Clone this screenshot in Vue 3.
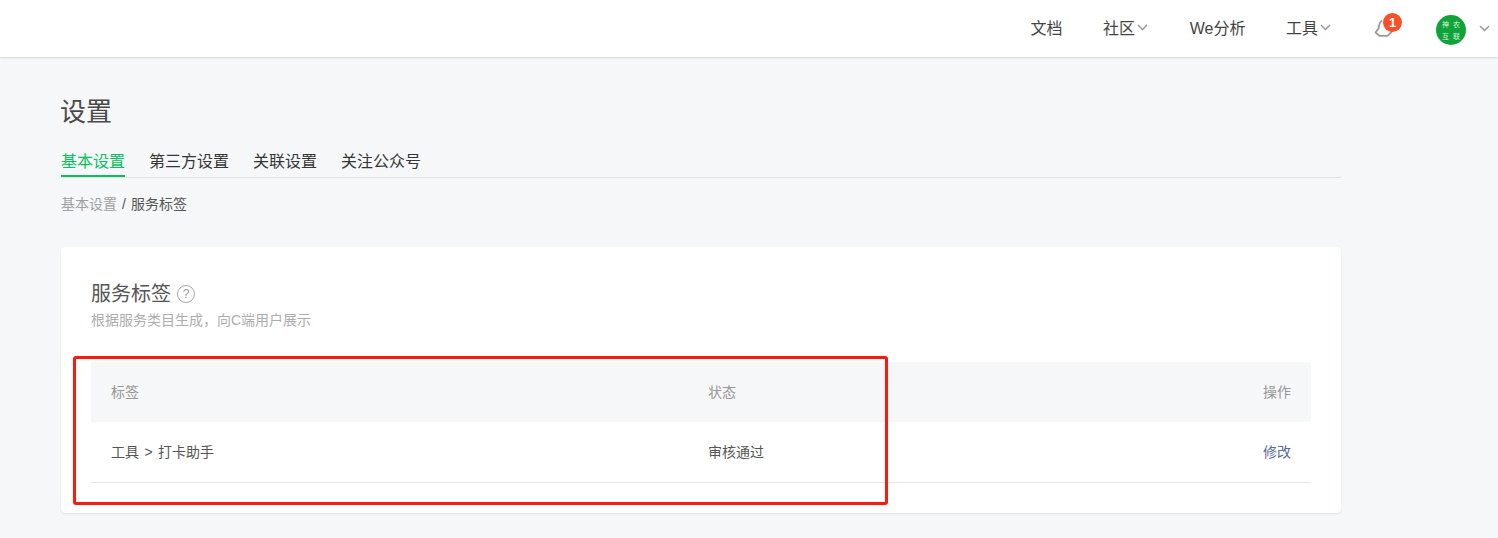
<script setup>
const navItems = [
  { label: "文档", arrow: false },
  { label: "社区", arrow: true },
  { label: "We分析", arrow: false },
  { label: "工具", arrow: true },
];
const tabs = ["基本设置", "第三方设置", "关联设置", "关注公众号"];
</script>

<template>
  <div class="page">
    <header class="topbar">
      <nav class="nav">
        <a v-for="item in navItems" :key="item.label" class="nav-item">
          {{ item.label }}
          <svg v-if="item.arrow" class="arrow" viewBox="0 0 11 7" width="11" height="7">
            <path d="M1 1l4.500 4.500L10 1" fill="none" stroke="#999" stroke-width="1.500" />
          </svg>
        </a>
      </nav>
      <div class="bell">
        <svg viewBox="0 0 20 20" width="20" height="20">
          <path
            d="M8 2.500C5.500 4 5 7 4.500 10.500L1.500 14.500L5.500 17.800H13.500L17.500 14L16 9"
            fill="none"
            stroke="#9a9a9a"
            stroke-width="1.800"
            stroke-linejoin="round"
          />
        </svg>
        <span class="badge">1</span>
      </div>
      <div class="avatar">
        <span>神</span><span>农</span><span>互</span><span>联</span>
      </div>
      <svg class="user-arrow" viewBox="0 0 11 7" width="11" height="7">
        <path d="M1 1l4.500 4.500L10 1" fill="none" stroke="#999" stroke-width="1.500" />
      </svg>
    </header>

    <main class="main">
      <h1 class="title">设置</h1>
      <div class="tabs">
        <a v-for="(tab, i) in tabs" :key="tab" class="tab" :class="{ active: i === 0 }">{{ tab }}</a>
      </div>
      <div class="crumbs"><span class="crumb-link">基本设置</span><span class="sep">/</span>服务标签</div>

      <section class="card">
        <div class="card-title">
          服务标签
          <span class="help">?</span>
        </div>
        <p class="card-desc">根据服务类目生成，向C端用户展示</p>

        <div class="table">
          <div class="row head">
            <div class="col-tag">标签</div>
            <div class="col-status">状态</div>
            <div class="col-action">操作</div>
          </div>
          <div class="row body">
            <div class="col-tag tag-path">工具 &gt; 打卡助手</div>
            <div class="col-status">审核通过</div>
            <div class="col-action"><a class="link">修改</a></div>
          </div>
        </div>
      </section>
    </main>

    <div class="red-box"></div>
  </div>
</template>

<style>
html,
body {
  margin: 0;
  background: #f6f7f9;
}
</style>

<style scoped>
.page {
  position: relative;
  height: 538px;
  overflow: hidden;
  background: #f6f7f9;
  font-family: "Liberation Sans", "Noto Sans CJK SC", sans-serif;
  color: #353535;
}
.topbar {
  display: flex;
  align-items: center;
  justify-content: flex-end;
  height: 57px;
  background: #fff;
  box-shadow: 0 1px 2px rgba(0, 0, 0, 0.14);
  padding-right: 8px;
  box-sizing: border-box;
}
.nav {
  display: flex;
  gap: 40.600px;
  margin-top: -4px;
}
.nav-item {
  display: flex;
  align-items: center;
  font-size: 16px;
  color: #444;
}
.arrow {
  margin: 2px 1px 0 2px;
}
.bell {
  position: relative;
  width: 20px;
  height: 20px;
  margin: -1px 0 0 42px;
}
.badge {
  position: absolute;
  top: -5px;
  left: 9px;
  width: 19px;
  height: 19px;
  line-height: 19px;
  border-radius: 50%;
  background: #fa5028;
  color: #fff;
  font-size: 13px;
  font-weight: 700;
  text-align: center;
}
.avatar {
  display: grid;
  grid-template-columns: 1fr 1fr;
  place-items: center;
  width: 30px;
  height: 30px;
  margin: 2px 0 0 42px;
  padding: 3px 4px;
  box-sizing: border-box;
  border-radius: 50%;
  background: #10a33a;
  color: #d9f2df;
  font-size: 7px;
}
.user-arrow {
  margin: -1px 0 0 13px;
}
.main {
  width: 1280px;
  margin-left: 61px;
}
.title {
  margin: 0 0 0 -1px;
  padding-top: 38px;
  font-size: 26px;
  line-height: 34px;
  font-weight: 400;
  color: #4a4a4a;
}
.tabs {
  display: flex;
  gap: 24px;
  margin-top: 19px;
  border-bottom: 1px solid #e0e1e3;
}
.tab {
  height: 29px;
  line-height: 27px;
  font-size: 16px;
  color: #353535;
  box-sizing: border-box;
}
.tab.active {
  color: #07c160;
  border-bottom: 2px solid #07c160;
  margin-bottom: -1px;
}
.crumbs {
  margin-top: 16px;
  font-size: 14px;
  line-height: 20px;
  color: #555;
}
.crumb-link {
  color: #a0a0a0;
}
.sep {
  margin: 0 5px;
}
.card {
  margin-top: 33px;
  height: 266px;
  padding: 32px 30px 30px;
  box-sizing: border-box;
  background: #fff;
  border-radius: 4px;
  box-shadow: 0 1px 2px rgba(0, 0, 0, 0.1);
}
.card-title {
  display: flex;
  align-items: center;
  gap: 6px;
  font-size: 20px;
  line-height: 30px;
  color: #555;
}
.help {
  width: 16px;
  height: 16px;
  line-height: 16px;
  border: 1px solid #a5a5a5;
  border-radius: 50%;
  color: #9a9a9a;
  font-size: 12px;
  text-align: center;
}
.card-desc {
  margin: 1px 0 0;
  font-size: 14px;
  line-height: 20px;
  color: #adadad;
}
.table {
  margin-top: 32px;
  font-size: 14px;
}
.row {
  display: flex;
  align-items: center;
  height: 60px;
  padding: 0 20px 2px;
  box-sizing: border-box;
}
.head {
  background: #f6f7f9;
  color: #969696;
}
.body {
  height: 61px;
  border-bottom: 1px solid #e4e5e7;
  color: #555;
}
.col-tag {
  width: 598px;
}
.tag-path {
  word-spacing: 1.500px;
}
.col-status {
  flex: 1;
  margin-left: -1px;
}
.col-action {
  text-align: right;
}
.link {
  color: #576b95;
}
.red-box {
  position: absolute;
  left: 73px;
  top: 356px;
  width: 815px;
  height: 149px;
  box-sizing: border-box;
  border: 3px solid #fb1a10;
  border-radius: 3px;
}
</style>
